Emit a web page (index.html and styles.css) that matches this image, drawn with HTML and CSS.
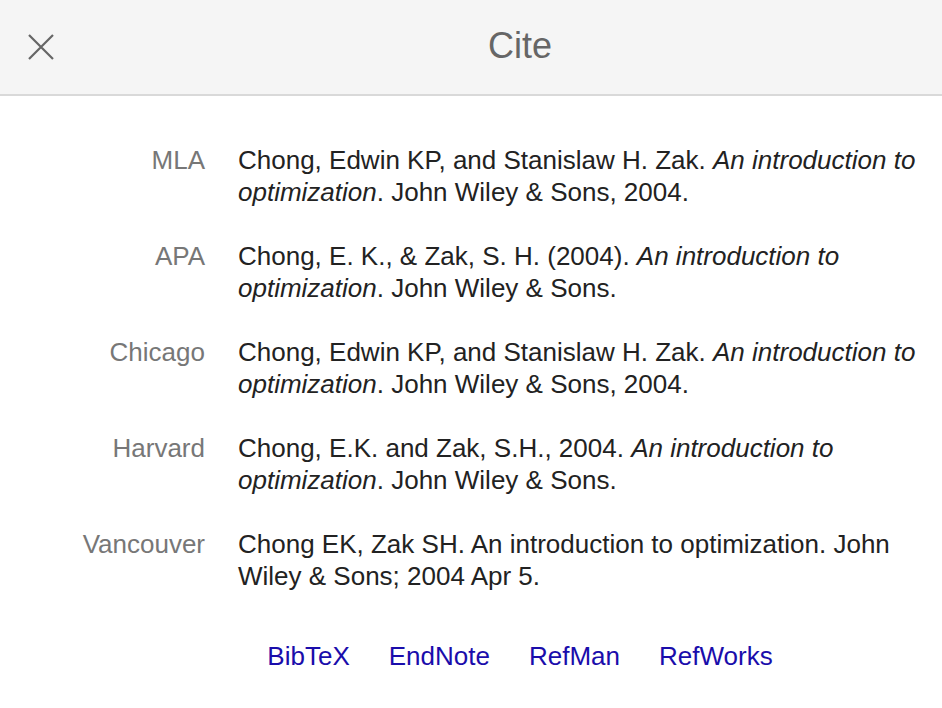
FILE: index.html
```html
<!DOCTYPE html>
<html lang="en">
<head>
    <meta charset="UTF-8">
    <meta name="viewport" content="width=device-width, initial-scale=1.0">
    <title>Cite</title>
    <link rel="stylesheet" href="styles.css">
</head>
<body>
    <div class="header">
        <button class="close" aria-label="Close">
            <svg width="28" height="28" viewBox="0 0 28 28">
                <path d="M2 2 L26 26 M26 2 L2 26" stroke="#666" stroke-width="2.2" fill="none"/>
            </svg>
        </button>
        <h1>Cite</h1>
    </div>

    <!-- Citation formats -->
    <div class="citations">
        <div class="label">MLA</div>
        <div class="text">Chong, Edwin KP, and Stanislaw H. Zak. <i>An introduction to optimization</i>. John Wiley &amp; Sons, 2004.</div>

        <div class="label">APA</div>
        <div class="text">Chong, E. K., &amp; Zak, S. H. (2004). <i>An introduction to optimization</i>. John Wiley &amp; Sons.</div>

        <div class="label">Chicago</div>
        <div class="text">Chong, Edwin KP, and Stanislaw H. Zak. <i>An introduction to optimization</i>. John Wiley &amp; Sons, 2004.</div>

        <div class="label">Harvard</div>
        <div class="text">Chong, E.K. and Zak, S.H., 2004. <i>An introduction to optimization</i>. John Wiley &amp; Sons.</div>

        <div class="label">Vancouver</div>
        <div class="text">Chong EK, Zak SH. An introduction to optimization. John Wiley &amp; Sons; 2004 Apr 5.</div>
    </div>

    <!-- Export links -->
    <div class="links">
        <a href="#">BibTeX</a>
        <a href="#">EndNote</a>
        <a href="#">RefMan</a>
        <a href="#">RefWorks</a>
    </div>
</body>
</html>
```

FILE: styles.css
```css
* {
    margin: 0;
    padding: 0;
    box-sizing: border-box;
    font-family: "Liberation Sans", Arial, sans-serif;
}
body {
    background: #fff;
    color: #222;
    width: 942px;
    height: 708px;
    overflow: hidden;
}
.header {
    position: relative;
    height: 96px;
    background: #f5f5f5;
    border-bottom: 2px solid #d9d9d9;
    display: flex;
    align-items: center;
    justify-content: center;
    padding-left: 98px;
}
.close {
    position: absolute;
    left: 27px;
    top: 33px;
    width: 28px;
    height: 28px;
    background: none;
    border: none;
    cursor: pointer;
}
.close svg {
    display: block;
}
h1 {
    font-size: 36px;
    font-weight: normal;
    color: #666;
    margin-top: -2px;
}
.citations {
    display: grid;
    grid-template-columns: 205px 1fr;
    column-gap: 33px;
    row-gap: 32px;
    padding: 48px 12px 0 0;
    font-size: 26px;
    line-height: 32px;
}
.label {
    text-align: right;
    color: #777;
}
.text {
    color: #222;
}
.links {
    display: flex;
    justify-content: center;
    gap: 39px;
    padding-left: 98px;
    margin-top: 48px;
    font-size: 26px;
    line-height: 32px;
}
.links a {
    color: #1a0dab;
    text-decoration: none;
}
```
